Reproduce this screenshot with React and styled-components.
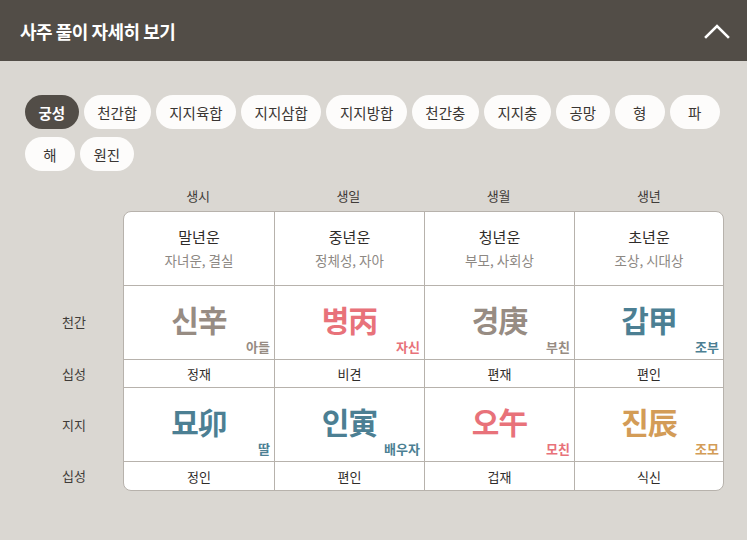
import React from "react";
import styled, { createGlobalStyle } from "styled-components";

const GlobalStyle = createGlobalStyle`
  body {
    margin: 0;
    background: #dad7d2;
    font-family: "Noto Sans CJK KR", "Noto Sans", sans-serif;
  }
`;

const COLORS = {
  gray: "#978c83",
  red: "#e8727a",
  teal: "#4c7f93",
  gold: "#d39c57",
};

const chips = [
  "궁성", "천간합", "지지육합", "지지삼합", "지지방합", "천간충",
  "지지충", "공망", "형", "파", "해", "원진",
];

const pillars = ["생시", "생일", "생월", "생년"];

const palace = [
  { title: "말년운", desc: "자녀운, 결실" },
  { title: "중년운", desc: "정체성, 자아" },
  { title: "청년운", desc: "부모, 사회상" },
  { title: "초년운", desc: "조상, 시대상" },
];

const stems = [
  { ch: "신辛", tag: "아들", color: "gray" },
  { ch: "병丙", tag: "자신", color: "red" },
  { ch: "경庚", tag: "부친", color: "gray" },
  { ch: "갑甲", tag: "조부", color: "teal" },
];

const stemGods = ["정재", "비견", "편재", "편인"];

const branches = [
  { ch: "묘卯", tag: "딸", color: "teal" },
  { ch: "인寅", tag: "배우자", color: "teal" },
  { ch: "오午", tag: "모친", color: "red" },
  { ch: "진辰", tag: "조모", color: "gold" },
];

const branchGods = ["정인", "편인", "겁재", "식신"];

const Header = styled.header`
  height: 61px;
  background: #524d47;
  display: flex;
  align-items: center;
  justify-content: space-between;
  padding: 0 17px 0 20px;
`;

const Title = styled.h2`
  margin: 0;
  color: #fff;
  font-size: 18px;
  font-weight: 700;
  letter-spacing: -0.5px;
`;

const Body = styled.section`
  padding: 34px 23px 40px 25px;
`;

const ChipList = styled.div`
  display: flex;
  flex-wrap: wrap;
  gap: 8px 5px;
  width: 699px;
`;

const Chip = styled.button`
  height: 34px;
  min-width: 50px;
  padding: 0 13.5px;
  border: none;
  border-radius: 17px;
  font-family: inherit;
  font-size: 14.5px;
  font-weight: ${(p) => (p.$active ? 700 : 400)};
  background: ${(p) => (p.$active ? "#524d47" : "#fdfcfb")};
  color: ${(p) => (p.$active ? "#fff" : "#3a3633")};
  cursor: pointer;
`;

const Grid = styled.div`
  display: flex;
  margin-top: 14px;
`;

const SideCol = styled.div`
  width: 98px;
  display: flex;
  flex-direction: column;
  padding-top: 26px;
`;

const SideLabel = styled.div`
  height: ${(p) => p.$h}px;
  display: flex;
  align-items: center;
  justify-content: center;
  font-size: 13px;
  color: #3f3b38;
  padding-bottom: ${(p) => p.$pb || 0}px;
  box-sizing: border-box;
`;

const MainCol = styled.div`
  width: 601px;
`;

const PillarRow = styled.div`
  display: grid;
  grid-template-columns: repeat(4, 1fr);
  height: 26px;
`;

const PillarName = styled.div`
  text-align: center;
  font-size: 13px;
  color: #3f3b38;
  line-height: 22px;
`;

const Table = styled.div`
  background: #fff;
  border: 1px solid #b7b2ac;
  border-radius: 8px;
  overflow: hidden;
`;

const Row = styled.div`
  display: grid;
  grid-template-columns: 150px 150px 150px 1fr;
  height: ${(p) => p.$h}px;
  border-top: ${(p) => (p.$first ? "none" : "1px solid #b7b2ac")};
`;

const Cell = styled.div`
  position: relative;
  display: flex;
  flex-direction: column;
  align-items: center;
  justify-content: center;
  border-left: 1px solid #b7b2ac;
  &:first-child {
    border-left: none;
  }
`;

const PalaceTitle = styled.div`
  font-size: 15px;
  color: #2f2c2a;
  line-height: 22px;
`;

const PalaceDesc = styled.div`
  font-size: 13.5px;
  color: #8d8883;
  line-height: 22px;
  margin-top: 1px;
`;

const Big = styled.div`
  font-size: 30px;
  font-weight: 700;
  color: ${(p) => COLORS[p.$color]};
  letter-spacing: -1px;
  margin-top: -8px;
`;

const Tag = styled.span`
  position: absolute;
  right: 4px;
  bottom: 3px;
  font-size: 13px;
  font-weight: 700;
  color: ${(p) => COLORS[p.$color]};
`;

const God = styled.div`
  font-size: 13px;
  color: #2f2c2a;
`;

const Chevron = () => (
  <svg width="26" height="18" viewBox="0 0 26 18" fill="none">
    <polyline
      points="2,15 13,4 24,15"
      stroke="#fff"
      strokeWidth="2.6"
      strokeLinecap="square"
    />
  </svg>
);

const App = () => {
  return (
    <>
      <GlobalStyle />
      <Header>
        <Title>사주 풀이 자세히 보기</Title>
        <Chevron />
      </Header>
      <Body>
        <ChipList>
          {chips.map((c, i) => (
            <Chip key={c} $active={i === 0}>{c}</Chip>
          ))}
        </ChipList>

        <Grid>
          <SideCol>
            <SideLabel $h={74} />
            <SideLabel $h={74} $pb={2}>천간</SideLabel>
            <SideLabel $h={28}>십성</SideLabel>
            <SideLabel $h={74}>지지</SideLabel>
            <SideLabel $h={29}>십성</SideLabel>
          </SideCol>

          <MainCol>
            <PillarRow>
              {pillars.map((p) => (
                <PillarName key={p}>{p}</PillarName>
              ))}
            </PillarRow>
            <Table>
              <Row $h={73} $first>
                {palace.map((p) => (
                  <Cell key={p.title}>
                    <PalaceTitle>{p.title}</PalaceTitle>
                    <PalaceDesc>{p.desc}</PalaceDesc>
                  </Cell>
                ))}
              </Row>
              <Row $h={73}>
                {stems.map((s) => (
                  <Cell key={s.ch}>
                    <Big $color={s.color}>{s.ch}</Big>
                    <Tag $color={s.color}>{s.tag}</Tag>
                  </Cell>
                ))}
              </Row>
              <Row $h={27}>
                {stemGods.map((g, i) => (
                  <Cell key={i}>
                    <God>{g}</God>
                  </Cell>
                ))}
              </Row>
              <Row $h={73}>
                {branches.map((s) => (
                  <Cell key={s.ch}>
                    <Big $color={s.color}>{s.ch}</Big>
                    <Tag $color={s.color}>{s.tag}</Tag>
                  </Cell>
                ))}
              </Row>
              <Row $h={28}>
                {branchGods.map((g, i) => (
                  <Cell key={i}>
                    <God>{g}</God>
                  </Cell>
                ))}
              </Row>
            </Table>
          </MainCol>
        </Grid>
      </Body>
    </>
  );
};

export default App;
